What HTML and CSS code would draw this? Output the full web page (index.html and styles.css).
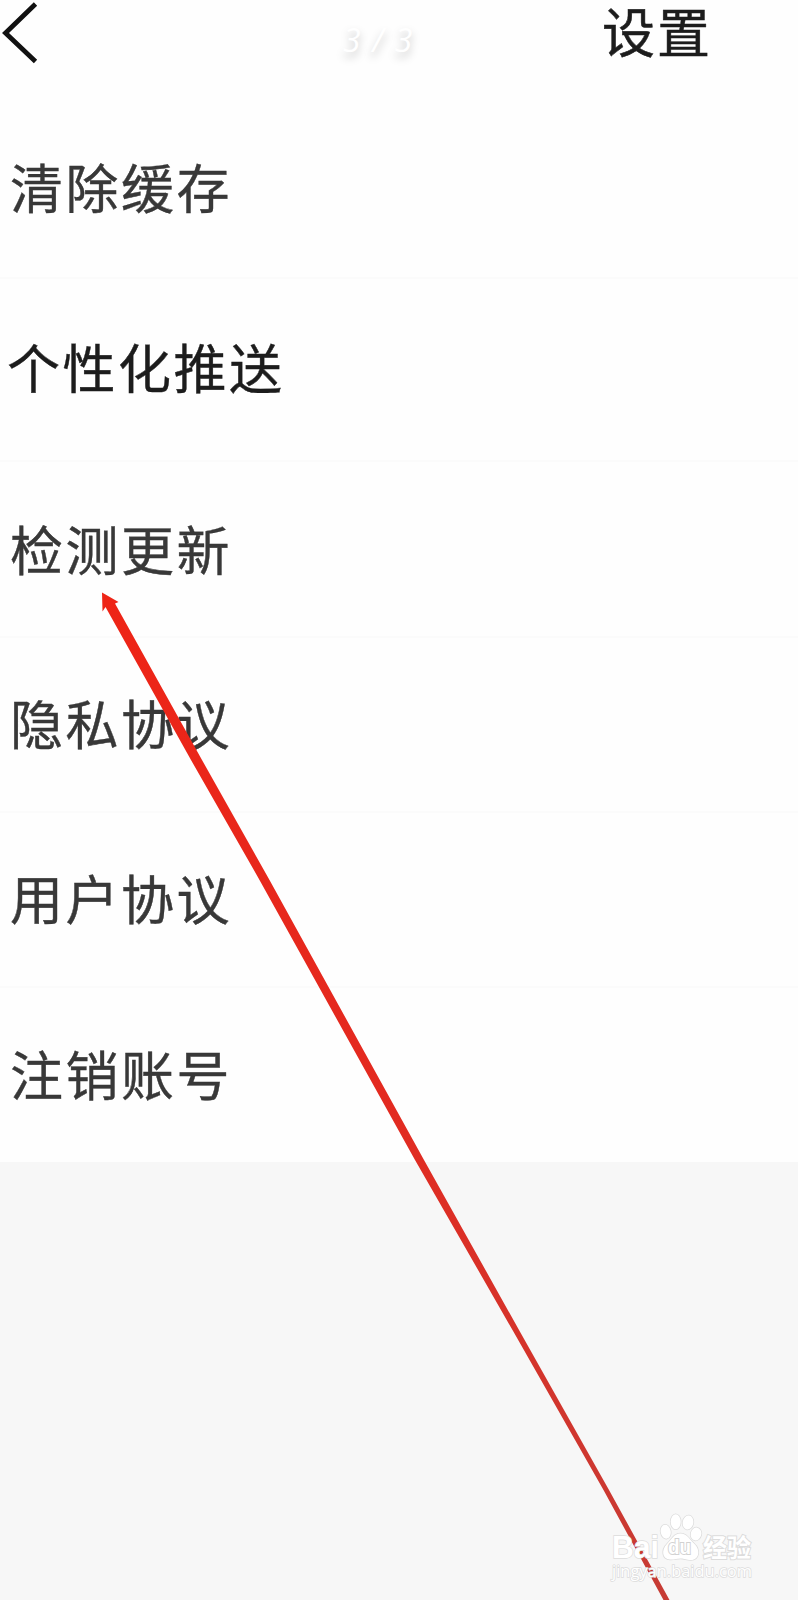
FILE: index.html
```html
<!DOCTYPE html>
<html lang="zh-CN">
<head>
    <meta charset="utf-8">
    <title>设置</title>
    <link rel="stylesheet" href="styles.css">
</head>
<body>
    <div class="screen">
        <header class="header">
            <svg class="back" width="40" height="66" viewBox="0 0 40 66">
                <path d="M35.500 4 L5.500 33 L35.500 61.500" fill="none" stroke="#111" stroke-width="4.800"/>
            </svg>
            <span class="counter">3 / 3</span>
            <h1 class="title">设置</h1>
        </header>
        <ul class="list">
            <li class="first">清除缓存</li>
            <li class="active">个性化推送</li>
            <li class="third">检测更新</li>
            <li>隐私协议</li>
            <li>用户协议</li>
            <li>注销账号</li>
        </ul>

        <svg class="arrow" width="798" height="1600" viewBox="0 0 798 1600">
            <defs>
                <linearGradient id="red" x1="0" y1="0" x2="0" y2="1">
                    <stop offset="0" stop-color="#ee2416"/>
                    <stop offset="0.5" stop-color="#e32a20"/>
                    <stop offset="1" stop-color="#c63c35"/>
                </linearGradient>
            </defs>
            <polygon points="102,592.500 118.500,602 115,603.500 202,760 269.500,880 424,1160 519,1330 609,1490 669.500,1600 663.500,1600 603.500,1490 512.500,1330 415,1160 259.500,880 191,760 105.500,607 102.500,611.500" fill="url(#red)"/>
        </svg>

        <svg class="watermark" width="160" height="80" viewBox="0 0 160 80">
            <g class="logo">
                <text class="bai" x="12" y="58" textLength="47" lengthAdjust="spacingAndGlyphs">Bai</text>
                <ellipse cx="65.700" cy="31.700" rx="5" ry="7" transform="rotate(-10 65.700 31.700)"/>
                <ellipse cx="75.700" cy="21.700" rx="5" ry="7.500"/>
                <ellipse cx="88" cy="22.500" rx="5.300" ry="7" transform="rotate(10 88 22.500)"/>
                <ellipse cx="96" cy="34" rx="5.300" ry="6.500" transform="rotate(12 96 34)"/>
                <path d="M80.500 33.500 C87 33.500 89 39 94 43.500 C101 50 99 60 91 60 C86 60 85 58.500 80.500 58.500 C76 58.500 74 60 70 59.500 C62 59 61 50 67 44 C72 39 74 33.500 80.500 33.500 Z"/>
                <text class="jingyan" x="103" y="57" textLength="48" lengthAdjust="spacingAndGlyphs">经验</text>
                <text class="du" x="68" y="54" textLength="23" lengthAdjust="spacingAndGlyphs">du</text>
                <text class="url" x="12" y="77" textLength="140" lengthAdjust="spacingAndGlyphs">jingyan.baidu.com</text>
            </g>
        </svg>
    </div>
</body>
</html>
```
FILE: styles.css
```css
body {
    margin: 0;
    background-color: #f7f7f7;
    font-family: "Noto Sans CJK SC", sans-serif;
    color: #383838;
}
.screen {
    position: relative;
    height: 1600px;
    overflow: hidden;
}
.header {
    display: flex;
    align-items: flex-start;
    height: 100px;
    background-color: #fefefe;
}
.back {
    flex: none;
}
.counter {
    width: 90px;
    margin-left: 303px;
    padding-top: 20px;
    font: italic 32px/40px "Open Sans", sans-serif;
    letter-spacing: 1.6px;
    white-space: nowrap;
    color: #fff;
    text-shadow: 0 5px 8px rgba(0,0,0,0.25);
}
.title {
    margin: 0 0 0 169px;
    font-size: 53px;
    line-height: 76px;
    margin-top: -8px;
    font-weight: 400;
    letter-spacing: 2px;
    color: #1c1c1c;
    -webkit-text-stroke: 0.5px #1c1c1c;
}
.list {
    margin: 0;
    padding: 0;
    list-style: none;
    background-color: #fefefe;
}
.list li {
    box-sizing: border-box;
    display: flex;
    align-items: center;
    height: 175px;
    padding-left: 10px;
    padding-bottom: 5px;
    border-bottom: 2px solid #fbfbfb;
    font-size: 53px;
    line-height: 76px;
    letter-spacing: 2.5px;
    -webkit-text-stroke: 0.4px;
}
.list .first {
    height: 179px;
}
.list .active {
    height: 183px;
    padding-left: 7px;
    padding-bottom: 7px;
    color: #1c1c1c;
}
.list .third {
    height: 176px;
    padding-bottom: 3px;
}
.list li:last-child {
    height: 174px;
    border-bottom: none;
}
.arrow {
    position: absolute;
    left: 0;
    top: 0;
}
/* logo over the bottom right corner */
.watermark {
    position: absolute;
    right: 38px;
    bottom: 20px;
    overflow: visible;
}
.logo {
    fill: #fff;
    stroke: #dcdcdc;
    stroke-width: 1.5px;
    paint-order: stroke;
}
.bai, .du {
    font: bold 32px "Liberation Sans", sans-serif;
}
.du {
    font-size: 20px;
    stroke: #d2d2d2;
    stroke-width: 2px;
}
.jingyan {
    font: bold 25px "Noto Sans CJK SC", sans-serif;
    stroke-width: 2px;
}
.url {
    font: 17px "Open Sans", sans-serif;
}
```
